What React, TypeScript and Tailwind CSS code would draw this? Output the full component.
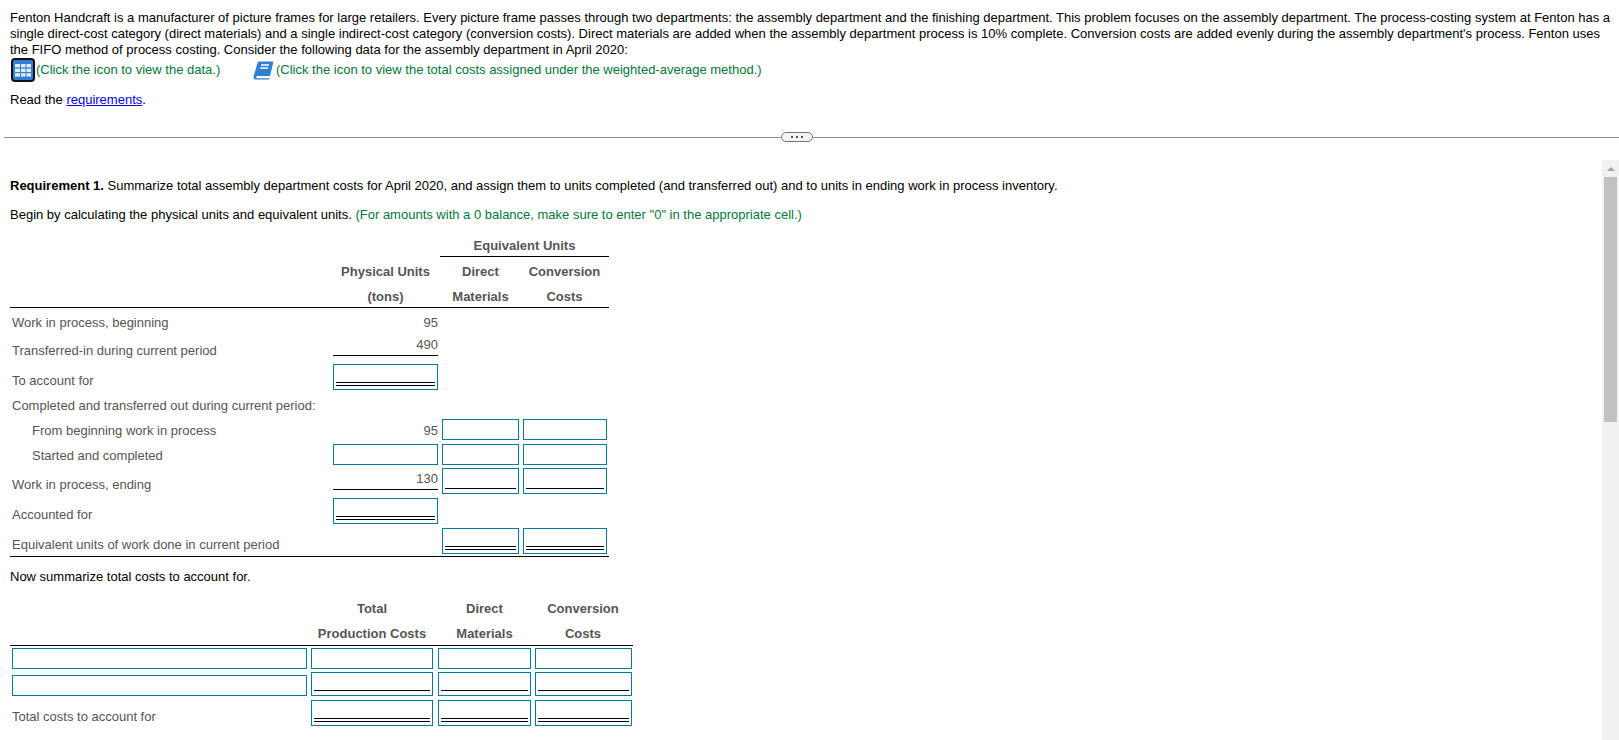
import type { ReactNode } from 'react';

const BOX = 'border border-[#007c9c] bg-white';

// answer cell, lines = 0 plain, 1 single underline, 2 double underline
function Box({ w, h, lines = 0, ml = 0 }: { w: string; h: string; lines?: number; ml?: string | number }) {
  return (
    <div className={`${w} ${h} ${BOX} shrink-0 flex flex-col justify-end px-[2px] pb-[3px]`} style={{ marginLeft: ml || undefined }}>
      {lines === 2 && <div className="h-[4px] border-y border-black" />}
      {lines === 1 && <div className="h-px bg-black mb-[1px]" />}
    </div>
  );
}

function Row({ h, children, className = '' }: { h: string; children: ReactNode; className?: string }) {
  return <div className={`flex items-end ${h} ${className}`}>{children}</div>;
}

function Label({ children, w = 'w-[323px]', indent = false, pb = 'pb-0' }: { children?: ReactNode; w?: string; indent?: boolean; pb?: string }) {
  return <div className={`${w} shrink-0 text-[#555] ${indent ? 'pl-[22px]' : 'pl-[2px]'} ${pb}`}>{children}</div>;
}

function Num({ children, line = false, className = '' }: { children: ReactNode; line?: boolean; className?: string }) {
  return <div className={`w-[105px] shrink-0 text-right text-[#555] ${line ? 'border-b border-black' : ''} ${className}`}>{children}</div>;
}

function Head({ children, w, className = '' }: { children: ReactNode; w: string; className?: string }) {
  return <div className={`${w} shrink-0 text-center font-bold text-[#555] ${className}`}>{children}</div>;
}

function App() {
  return (
    <div className="w-[1619px] h-[740px] overflow-hidden bg-white text-[13px] leading-[16px] text-black font-['Liberation_Sans',Arial,sans-serif]">
      <div className="pl-[10px] pr-[4px] pt-[10px]">
        <p>
          Fenton Handcraft is a manufacturer of picture frames for large retailers. Every picture frame passes through two departments: the assembly department and the finishing department. This problem focuses on the assembly department. The process-costing system at Fenton has a single direct-cost category (direct materials) and a single indirect-cost category (conversion costs). Direct materials are added when the assembly department process is 10% complete. Conversion costs are added evenly during the assembly department's process. Fenton uses the FIFO method of process costing. Consider the following data for the assembly department in April 2020:
        </p>
        <div className="flex items-center h-[24px] text-[#007a37]">
          <svg width="24" height="24" viewBox="0 0 24 24" className="ml-[1px] shrink-0">
            <rect x="1" y="1" width="22" height="22" rx="3" fill="#2f7fd6" stroke="#111" strokeWidth="2" />
            <g fill="#e3eefb">
              <rect x="4" y="6" width="5" height="3.4" />
              <rect x="10" y="6" width="4.5" height="3.4" />
              <rect x="15.5" y="6" width="4.5" height="3.4" />
              <rect x="4" y="10.6" width="5" height="3.4" />
              <rect x="10" y="10.6" width="4.5" height="3.4" />
              <rect x="15.5" y="10.6" width="4.5" height="3.4" />
              <rect x="4" y="15.2" width="5" height="3.4" />
              <rect x="10" y="15.2" width="4.5" height="3.4" />
              <rect x="15.5" y="15.2" width="4.5" height="3.4" />
            </g>
          </svg>
          <span className="ml-[1px] w-[217px]">(Click the icon to view the data.)</span>
          <svg width="21" height="19" viewBox="0 0 21 19" className="shrink-0">
            <path d="M5 0.5H20.5L17 15H4.5C3 15 3 17.3 4.5 17.3H16.5L16.2 18.6H3C0.8 18.6 0.2 17 0.7 15Z" fill="#2f7fd6" />
            <path d="M8 4H16M7.3 7H15" stroke="#fff" strokeWidth="1.4" />
          </svg>
          <span className="ml-[2px]">(Click the icon to view the total costs assigned under the weighted-average method.)</span>
        </div>
        <p className="mt-[10px]">
          Read the <a href="#" className="text-[#0000ee] underline">requirements</a>.
        </p>
      </div>

      <div className="flex items-center h-[10px] mt-[24px] ml-[4px]">
        <div className="w-[777px] h-px bg-[#8a8fa3]" />
        <div className="w-[32px] h-[10px] rounded-full border border-[#6b7385] bg-[#f4f4f6] flex items-center justify-center gap-[3px]">
          <span className="w-[2px] h-[2px] bg-[#555]" />
          <span className="w-[2px] h-[2px] bg-[#555]" />
          <span className="w-[2px] h-[2px] bg-[#555]" />
        </div>
        <div className="flex-1 h-px bg-[#8a8fa3]" />
      </div>

      <div className="flex h-[581px] mt-[18px]">
        <div className="flex-1 min-w-0 pl-[10px] pt-[18px]">
          <p><b>Requirement 1.</b> Summarize total assembly department costs for April 2020, and assign them to units completed (and transferred out) and to units in ending work in process inventory.</p>
          <p className="mt-[13px]">
            Begin by calculating the physical units and equivalent units. <span className="text-[#007a37]">(For amounts with a 0 balance, make sure to enter "0" in the appropriate cell.)</span>
          </p>

          <div className="w-[599px] mt-[15px]">
            <Row h="h-[19px]">
              <div className="w-[430px] shrink-0" />
              <Head w="w-[169px]" className="border-b border-black h-[19px]">Equivalent Units</Head>
            </Row>
            <Row h="h-[23px]">
              <div className="w-[323px] shrink-0" />
              <Head w="w-[105px]">Physical Units</Head>
              <Head w="w-[77px]" className="ml-[4px]">Direct</Head>
              <Head w="w-[91px]">Conversion</Head>
            </Row>
            <Row h="h-[28px]" className="border-b border-black pb-[2px]">
              <div className="w-[323px] shrink-0" />
              <Head w="w-[105px]">(tons)</Head>
              <Head w="w-[77px]" className="ml-[4px]">Materials</Head>
              <Head w="w-[91px]">Costs</Head>
            </Row>
            <Row h="h-[23px]">
              <Label>Work in process, beginning</Label>
              <Num>95</Num>
            </Row>
            <Row h="h-[25px]">
              <Label pb="-mb-[3px]">Transferred-in during current period</Label>
              <Num line><span className="relative bottom-[2px]">490</span></Num>
            </Row>
            <Row h="h-[34px]">
              <Label pb="pb-[1px]">To account for</Label>
              <Box w="w-[105px]" h="h-[26px]" lines={2} />
            </Row>
            <Row h="h-[25px]">
              <Label pb="pb-[1px]">Completed and transferred out during current period:</Label>
            </Row>
            <Row h="h-[25px]">
              <Label indent pb="pb-[1px]">From beginning work in process</Label>
              <Num className="pb-[1px]">95</Num>
              <Box w="w-[77px]" h="h-[21px]" ml="4px" />
              <Box w="w-[84px]" h="h-[21px]" ml="4px" />
            </Row>
            <Row h="h-[25px]">
              <Label indent pb="pb-[1px]">Started and completed</Label>
              <Box w="w-[105px]" h="h-[21px]" />
              <Box w="w-[77px]" h="h-[21px]" ml="4px" />
              <Box w="w-[84px]" h="h-[21px]" ml="4px" />
            </Row>
            <Row h="h-[29px]">
              <Label pb="pb-[1px]">Work in process, ending</Label>
              <Num line className="mb-[4px]"><span className="relative bottom-[2px]">130</span></Num>
              <Box w="w-[77px]" h="h-[26px]" lines={1} ml="4px" />
              <Box w="w-[84px]" h="h-[26px]" lines={1} ml="4px" />
            </Row>
            <Row h="h-[30px]">
              <Label pb="pb-px">Accounted for</Label>
              <Box w="w-[105px]" h="h-[26px]" lines={2} />
            </Row>
            <Row h="h-[33px]" className="border-b border-black pb-[2px]">
              <Label pb="pb-[1px]">Equivalent units of work done in current period</Label>
              <div className="w-[105px] shrink-0" />
              <Box w="w-[77px]" h="h-[26px]" lines={2} ml="4px" />
              <Box w="w-[84px]" h="h-[26px]" lines={2} ml="4px" />
            </Row>
          </div>

          <p className="mt-[12px]">Now summarize total costs to account for.</p>

          <div className="w-[623px] mt-[9px]">
            <Row h="h-[23px]">
              <div className="w-[301px] shrink-0" />
              <Head w="w-[122px]">Total</Head>
              <Head w="w-[93px]" className="ml-[5px]">Direct</Head>
              <Head w="w-[96px]" className="ml-[4px]">Conversion</Head>
            </Row>
            <Row h="h-[29px]" className="border-b border-black pb-[3px]">
              <div className="w-[301px] shrink-0" />
              <Head w="w-[122px]">Production Costs</Head>
              <Head w="w-[93px]" className="ml-[5px]">Materials</Head>
              <Head w="w-[96px]" className="ml-[4px]">Costs</Head>
            </Row>
            <Row h="h-[23px]" className="pl-[2px]">
              <Box w="w-[295px]" h="h-[21px]" />
              <Box w="w-[122px]" h="h-[21px]" ml="4px" />
              <Box w="w-[93px]" h="h-[21px]" ml="5px" />
              <Box w="w-[97px]" h="h-[21px]" ml="4px" />
            </Row>
            <Row h="h-[27px]" className="pl-[2px]">
              <Box w="w-[295px]" h="h-[21px]" />
              <Box w="w-[122px]" h="h-[24px]" lines={1} ml="4px" />
              <Box w="w-[93px]" h="h-[24px]" lines={1} ml="5px" />
              <Box w="w-[97px]" h="h-[24px]" lines={1} ml="4px" />
            </Row>
            <Row h="h-[30px]" className="pl-[2px]">
              <div className="w-[295px] shrink-0 text-[#555] pb-px">Total costs to account for</div>
              <Box w="w-[122px]" h="h-[26px]" lines={2} ml="4px" />
              <Box w="w-[93px]" h="h-[26px]" lines={2} ml="5px" />
              <Box w="w-[97px]" h="h-[26px]" lines={2} ml="4px" />
            </Row>
          </div>
        </div>

        {/* scrollbar */}
        <div className="w-[17px] shrink-0 bg-[#f1f1f1] flex flex-col items-center">
          <div className="h-[17px] flex items-center justify-center">
            <div className="w-0 h-0 border-x-[4px] border-x-transparent border-b-[4px] border-b-[#a3a3a3]" />
          </div>
          <div className="w-[13px] h-[245px] bg-[#c1c1c1]" />
        </div>
      </div>
    </div>
  );
}

export default App;
